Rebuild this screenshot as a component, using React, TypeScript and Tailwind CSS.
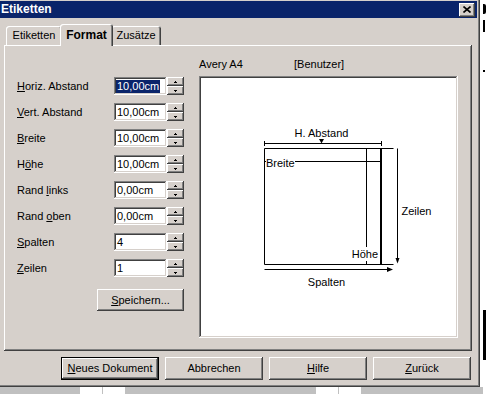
import React from 'react';

const raised =
  'shadow-[inset_-1px_-1px_#404040,inset_1px_1px_#ffffff,inset_-2px_-2px_#808080,inset_2px_2px_#d6d0cb]';
const sunken =
  'shadow-[inset_-1px_-1px_#ffffff,inset_1px_1px_#808080,inset_-2px_-2px_#d6d0cb,inset_2px_2px_#404040]';

function U({ children }: { children: React.ReactNode }) {
  return <span className="underline underline-offset-[1px] decoration-1">{children}</span>;
}

function Spin() {
  return (
    <div className="flex flex-col w-[17px] h-[18px]">
      <div className={`h-[9px] flex items-center justify-center bg-[#d6d0cb] ${raised}`}>
        <svg width="3" height="2" className="block">
          <rect x="1" y="0" width="1" height="1" fill="#000" />
          <rect x="0" y="1" width="3" height="1" fill="#000" />
        </svg>
      </div>
      <div className={`h-[9px] flex items-center justify-center bg-[#d6d0cb] ${raised}`}>
        <svg width="3" height="2" className="block">
          <rect x="0" y="0" width="3" height="1" fill="#000" />
          <rect x="1" y="1" width="1" height="1" fill="#000" />
        </svg>
      </div>
    </div>
  );
}

type Row = { label: React.ReactNode; value: string; selected?: boolean };

const rows: Row[] = [
  { label: <><U>H</U>oriz. Abstand</>, value: '10,00cm', selected: true },
  { label: <><U>V</U>ert. Abstand</>, value: '10,00cm' },
  { label: <><U>B</U>reite</>, value: '10,00cm' },
  { label: <>H<U>ö</U>he</>, value: '10,00cm' },
  { label: <>Rand <U>l</U>inks</>, value: '0,00cm' },
  { label: <>Rand <U>o</U>ben</>, value: '0,00cm' },
  { label: <><U>S</U>palten</>, value: '4' },
  { label: <><U>Z</U>eilen</>, value: '1' },
];

function Diagram() {
  return (
    <svg width="259" height="262" className="block" fontFamily="'Liberation Sans', Arial, sans-serif" fontSize="11">
      {/* H. Abstand */}
      <text x="122.5" y="61" textAnchor="middle" fill="#000">H. Abstand</text>
      <line x1="65.5" y1="67.5" x2="182.5" y2="67.5" stroke="#000" />
      <line x1="65.5" y1="65" x2="65.5" y2="70" stroke="#000" />
      <line x1="182.5" y1="65" x2="182.5" y2="70" stroke="#000" />
      <polygon points="120,63 125,63 122.5,67.5" fill="#000" />
      {/* label frame */}
      <line x1="65.5" y1="72.5" x2="194.5" y2="72.5" stroke="#000" />
      <line x1="65.5" y1="72.5" x2="65.5" y2="188.5" stroke="#000" />
      <line x1="65.5" y1="188.5" x2="194.5" y2="188.5" stroke="#000" />
      <line x1="167.5" y1="72.5" x2="167.5" y2="188.5" stroke="#000" />
      <rect x="181" y="72" width="2" height="117" fill="#000" />
      {/* Breite */}
      <line x1="65.5" y1="85.5" x2="181" y2="85.5" stroke="#000" />
      <rect x="67" y="80" width="29" height="12" fill="#fff" />
      <text x="67" y="90.5" fill="#000">Breite</text>
      {/* Höhe */}
      <rect x="153" y="171" width="27" height="14" fill="#fff" />
      <text x="179" y="181.5" textAnchor="end" fill="#000">Höhe</text>
      {/* Spalten */}
      <line x1="65.5" y1="193.5" x2="189" y2="193.5" stroke="#000" />
      <polygon points="188,191 194,193.5 188,196" fill="#000" />
      <text x="127.5" y="209.5" textAnchor="middle" fill="#000">Spalten</text>
      {/* Zeilen */}
      <line x1="198.5" y1="72.5" x2="198.5" y2="183" stroke="#000" />
      <polygon points="196.5,182 200.5,182 198.5,187.5" fill="#000" />
      <text x="202.5" y="138.5" fill="#000">Zeilen</text>
    </svg>
  );
}

function Button({ children, isDefault }: { children: React.ReactNode; isDefault?: boolean }) {
  const cls = isDefault
    ? 'shadow-[inset_-1px_-1px_#000000,inset_1px_1px_#000000,inset_-2px_-2px_#404040,inset_2px_2px_#ffffff,inset_-3px_-3px_#808080]'
    : raised;
  return (
    <div className={`w-[98px] h-[23px] flex items-center justify-center bg-[#d6d0cb] text-[11px] ${cls}`}>
      {children}
    </div>
  );
}

export default function App() {
  return (
    <div className="w-[495px] h-[405px] bg-white overflow-hidden flex font-['Liberation_Sans',Arial,sans-serif] text-black text-[11px] leading-[13px]">
      <div className="flex flex-col">
        {/* dialog */}
        <div className="w-[480px] h-[387px] bg-[#d6d0cb] flex flex-col pt-[1px] shadow-[inset_-1px_-1px_#404040,inset_-2px_-2px_#808080]">
          {/* title bar */}
          <div className="h-[17px] mr-[3px] bg-[#0a246a] flex items-center justify-between pl-[1px] pr-[2px]">
            <span className="text-white font-bold text-[12px]">Etiketten</span>
            <div className={`w-[16px] h-[14px] bg-[#d6d0cb] flex items-center justify-center ${raised}`}>
              <svg width="8" height="7" className="block">
                <path d="M0.5 0.5 L7.5 6.5 M7.5 0.5 L0.5 6.5" stroke="#000" strokeWidth="1.6" />
              </svg>
            </div>
          </div>

          {/* tabs */}
          <div className="h-[21px] mt-[6px] flex items-end pl-[6px]">
            <div className="w-[56px] h-[19px] rounded-t-[3px] flex items-center justify-center shadow-[inset_1px_1px_#ffffff,inset_-1px_0_#404040,inset_-2px_0_#808080]">
              Etiketten
            </div>
            <div className="relative z-10 w-[53px] h-[22px] -mx-[2px] -mb-[1px] bg-[#d6d0cb] rounded-t-[3px] flex items-center justify-center font-bold text-[12px] shadow-[inset_1px_1px_#ffffff,inset_-1px_0_#404040,inset_-2px_0_#808080]">
              Format
            </div>
            <div className="w-[50px] h-[19px] rounded-t-[3px] flex items-center justify-center shadow-[inset_1px_1px_#ffffff,inset_-1px_0_#404040,inset_-2px_0_#808080]">
              Zusätze
            </div>
          </div>

          {/* panel */}
          <div className="ml-[4px] w-[468px] h-[306px] flex pl-[13px] pt-[13px] shadow-[inset_-1px_-1px_#404040,inset_1px_1px_#ffffff,inset_-2px_-2px_#808080]">
            <div className="flex flex-col w-[167px] pt-[19px]">
              <div className="flex flex-col gap-[8px]">
                {rows.map((r, i) => (
                  <div key={i} className="flex items-center h-[18px]">
                    <div className="w-[97px]">{r.label}</div>
                    <div className={`w-[53px] h-[18px] bg-white flex items-center pl-[2px] ${sunken}`}>
                      {r.selected ? (
                        <span className="bg-[#0a246a] text-white px-[1px]">{r.value}</span>
                      ) : (
                        <span className="px-[1px]">{r.value}</span>
                      )}
                    </div>
                    <Spin />
                  </div>
                ))}
              </div>
              <div className={`self-end mt-[12px] w-[87px] h-[22px] flex items-center justify-center ${raised}`}>
                <U>S</U>peichern...
              </div>
            </div>

            <div className="ml-[15px] flex flex-col">
              <div className="flex h-[13px]">
                <div className="w-[95px]">Avery A4</div>
                <div>[Benutzer]</div>
              </div>
              <div className={`mt-[5px] w-[259px] h-[262px] bg-white ${sunken}`}>
                <Diagram />
              </div>
            </div>
          </div>

          {/* buttons */}
          <div className="mt-[6px] ml-[61px] flex gap-[6px]">
            <Button isDefault>
              <span><U>N</U>eues Dokument</span>
            </Button>
            <Button>Abbrechen</Button>
            <Button>
              <span><U>H</U>ilfe</span>
            </Button>
            <Button>
              <span><U>Z</U>urück</span>
            </Button>
          </div>
        </div>

        {/* background strip */}
        <div className="h-[7px] w-[483px] flex bg-[#c0c0c0]">
          <div className="w-[80px]" />
          <div className="w-[22px] bg-white" />
          <div className="w-[1px]" />
          <div className="w-[22px] bg-white" />
          <div className="w-[191px]" />
          <div className="w-[22px] bg-white" />
          <div className="w-[1px]" />
          <div className="w-[22px] bg-white" />
        </div>
      </div>

      {/* window behind */}
      <div className="flex flex-col w-[3px]">
        <div className="h-[4px]" />
        <div className="h-[10px] w-[3px] bg-black rounded-r-[2px]" />
        <div className="h-[6px]" />
        <div className="h-[12px] w-[2px] bg-black" />
        <div className="h-[38px]" />
        <div className="h-[2px] w-[2px] bg-black" />
        <div className="h-[238px]" />
        <div className="h-[50px] w-[3px] bg-black" />
      </div>
    </div>
  );
}
